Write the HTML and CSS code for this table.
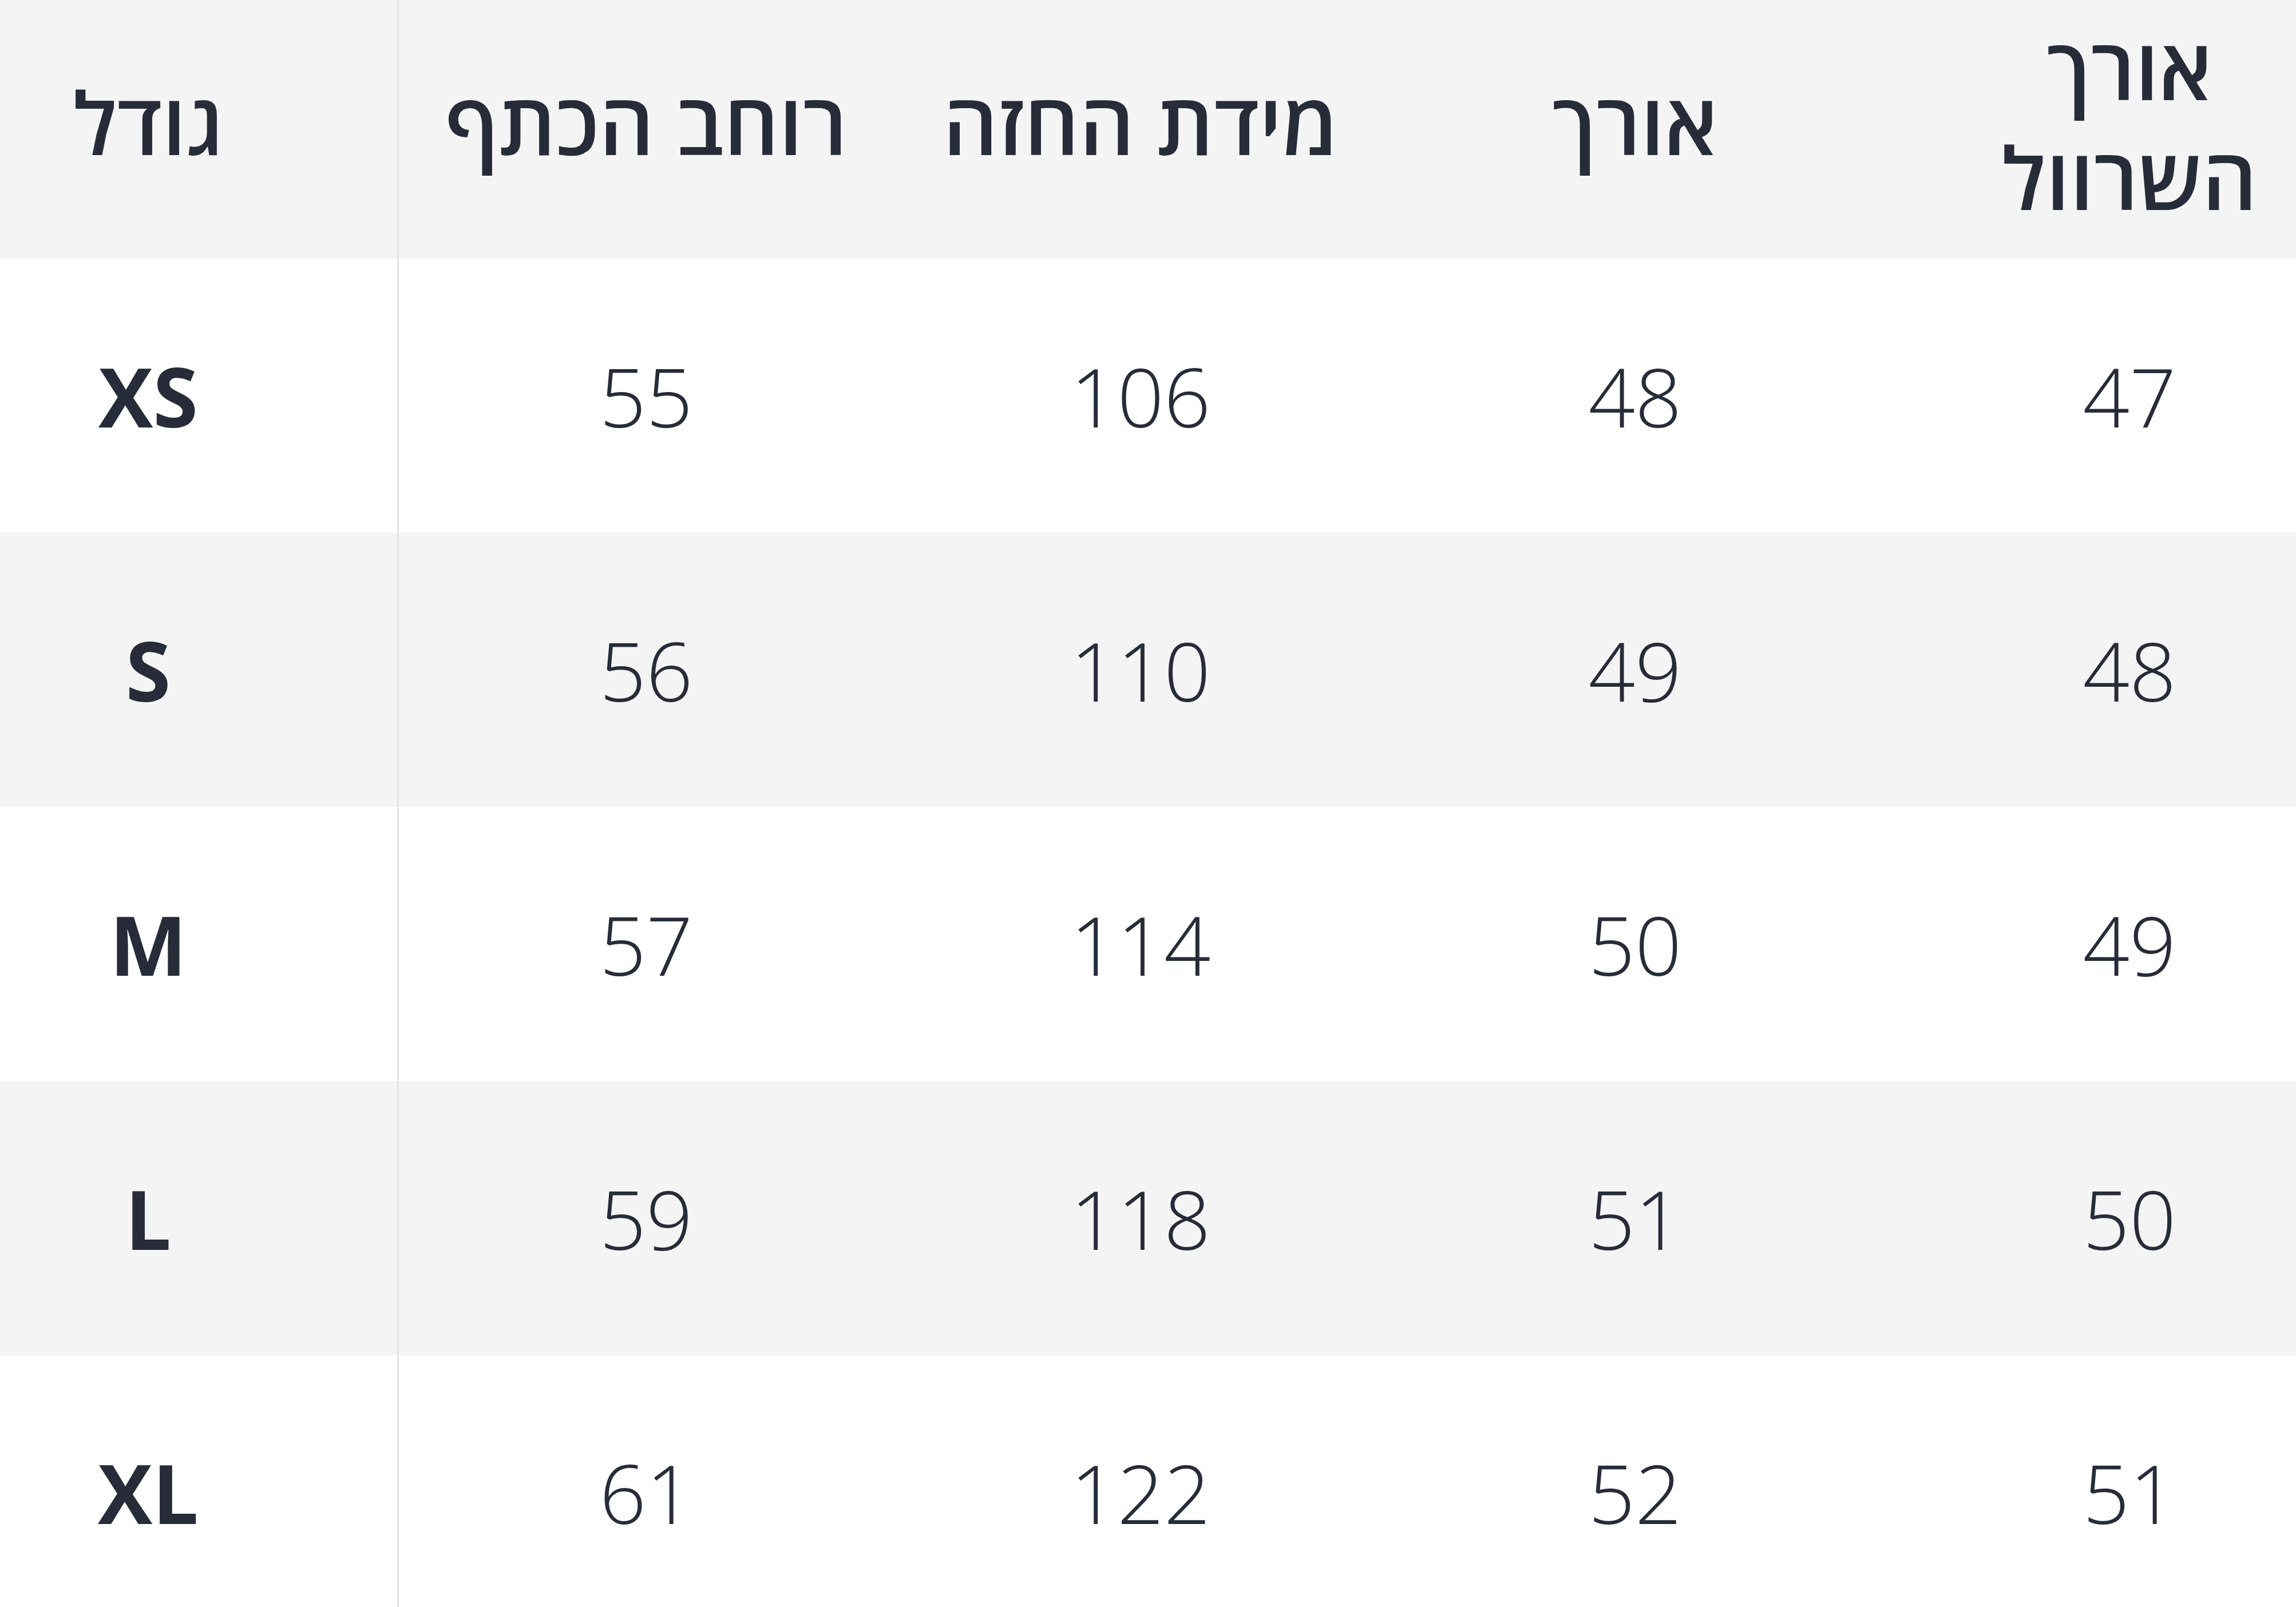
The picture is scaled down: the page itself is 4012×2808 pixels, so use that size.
FILE: index.html
```html
<!DOCTYPE html>
<html lang="he">
<head>
<meta charset="utf-8">
<title>טבלת מידות</title>
<link rel="stylesheet" href="styles.css">
</head>
<body>
<div class="size-table">
  <div class="row head">
    <div class="cell size">גודל</div>
    <div class="cell">רוחב הכתף</div>
    <div class="cell">מידת החזה</div>
    <div class="cell">אורך</div>
    <div class="cell">אורך<br>השרוול</div>
  </div>
  <div class="row">
    <div class="cell size">XS</div>
    <div class="cell">55</div>
    <div class="cell">106</div>
    <div class="cell">48</div>
    <div class="cell">47</div>
  </div>
  <div class="row alt">
    <div class="cell size">S</div>
    <div class="cell">56</div>
    <div class="cell">110</div>
    <div class="cell">49</div>
    <div class="cell">48</div>
  </div>
  <div class="row">
    <div class="cell size">M</div>
    <div class="cell">57</div>
    <div class="cell">114</div>
    <div class="cell">50</div>
    <div class="cell">49</div>
  </div>
  <div class="row alt">
    <div class="cell size">L</div>
    <div class="cell">59</div>
    <div class="cell">118</div>
    <div class="cell">51</div>
    <div class="cell">50</div>
  </div>
  <div class="row">
    <div class="cell size">XL</div>
    <div class="cell">61</div>
    <div class="cell">122</div>
    <div class="cell">52</div>
    <div class="cell">51</div>
  </div>
</div>
</body>
</html>
```
FILE: styles.css
```css
html, body {
  margin: 0;
  padding: 0;
  background: #ffffff;
  overflow: hidden;
}

body {
  font-family: "Open Sans", "DejaVu Sans", sans-serif;
  color: #272c38;
}

.size-table {
  width: 4320px;
  margin-left: -164px;
}

.row {
  display: grid;
  grid-template-columns: 861px repeat(4, 864px);
  height: 479px;
  background: #ffffff;
}

.row.head {
  height: 452px;
  background: #f5f4f5;
}

.row.alt {
  background: #f5f4f5;
}

.cell {
  display: flex;
  align-items: center;
  justify-content: center;
  text-align: center;
  font-size: 143px;
  font-weight: 300;
  line-height: 1.35;
}

.cell.size {
  font-weight: 700;
  border-right: 3px solid #e2e2e3;
  padding-right: 12px;
}

.head .cell {
  font-weight: 600;
  font-size: 150px;
  line-height: 1.28;
  padding-bottom: 26px;
}

.head .cell.size {
  font-weight: 600;
}
```
